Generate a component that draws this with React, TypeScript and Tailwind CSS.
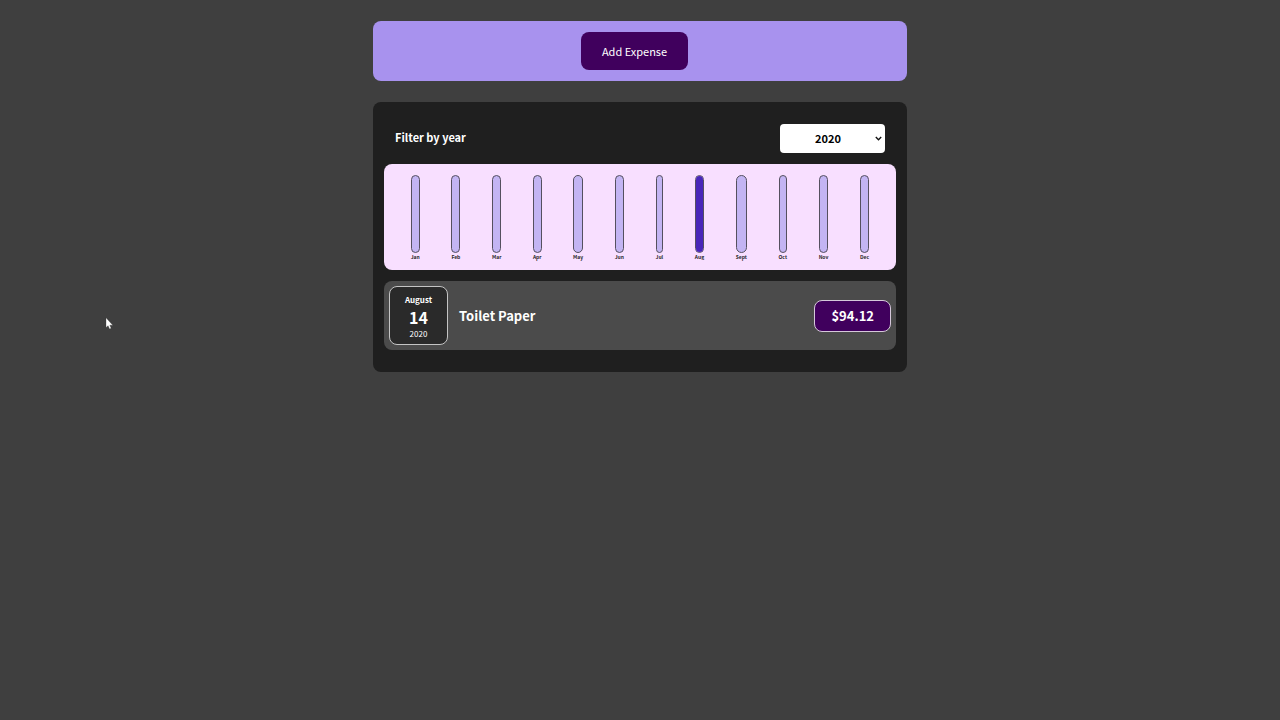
import { useState } from "react";

const MONTHS = ["Jan", "Feb", "Mar", "Apr", "May", "Jun", "Jul", "Aug", "Sept", "Oct", "Nov", "Dec"];

type Expense = { title: string; amount: number; month: number; monthName: string; day: number; year: string };

const EXPENSES: Expense[] = [
  { title: "Toilet Paper", amount: 94.12, month: 7, monthName: "August", day: 14, year: "2020" },
];

function ChartBar({ label, percent }: { label: string; percent: number }) {
  return (
    <li className="flex h-full flex-col items-center">
      <div className="flex w-full flex-1 flex-col justify-end overflow-hidden rounded-lg border border-[#55505f] bg-[#c3b4f3]">
        <div className="bg-[#4826b9]" style={{ height: `${percent}%` }} />
      </div>
      <span className="text-center text-[5px] leading-[8px] font-bold text-[#1f1f1f]">{label}</span>
    </li>
  );
}

function Chart({ expenses }: { expenses: Expense[] }) {
  const totals = MONTHS.map((_, i) => expenses.filter((e) => e.month === i).reduce((s, e) => s + e.amount, 0));
  const max = Math.max(...totals, 1);
  return (
    <ul className="flex h-[106px] justify-around rounded-lg bg-[#f8dfff] px-[11px] pt-[11px] pb-[9px]">
      {MONTHS.map((m, i) => (
        <ChartBar key={m} label={m} percent={(totals[i] / max) * 100} />
      ))}
    </ul>
  );
}

function ExpenseItem({ expense }: { expense: Expense }) {
  return (
    <li className="flex items-center gap-[11px] rounded-lg bg-[#4b4b4b] p-[5px] text-white">
      <time className="flex w-[59px] flex-col items-center rounded-lg border border-[#c4c4c4] bg-[#2a2a2a] pt-[6px] pb-1">
        <span className="text-[8px] leading-[14px] font-bold">{expense.monthName}</span>
        <span className="text-base leading-[20px] font-bold">{expense.day}</span>
        <span className="text-[8px] leading-[13px]">{expense.year}</span>
      </time>
      <h2 className="flex-1 text-[13px] leading-5 font-bold">{expense.title}</h2>
      <p className="rounded-lg border border-[#d5c8da] bg-[#40005d] px-4 py-[5px] text-[13px] leading-5 font-bold">
        ${expense.amount.toFixed(2)}
      </p>
    </li>
  );
}

export default function App() {
  const [year, setYear] = useState("2020");
  const shown = EXPENSES.filter((e) => e.year === year);
  return (
    <div className="min-h-screen bg-[#3f3f3f] px-4 py-[21px] font-['Noto_Sans_CJK_JP','Noto_Sans',sans-serif]">
      <main className="mx-auto flex max-w-[534px] flex-col gap-[21px]">
        <section className="flex justify-center rounded-lg bg-[#a892ee] p-[11px]">
          <button
            type="button"
            className="mr-[11px] rounded-lg bg-[#40005d] px-[21px] py-[10px] text-[11px] leading-[18px] text-white"
          >
            Add Expense
          </button>
        </section>
        <section className="rounded-lg bg-[#1f1f1f] px-[11px] pt-[22px] pb-[22px]">
          <div className="mb-[11px] flex items-center justify-between px-[11px]">
            <label htmlFor="year" className="pb-1 text-[11px] leading-4 font-bold text-white">
              Filter by year
            </label>
            <div className="relative">
              <select
                id="year"
                value={year}
                onChange={(e) => setYear(e.target.value)}
                className="block h-[29px] w-[105px] appearance-none rounded-sm bg-white pl-[35px] text-[11px] font-bold text-black"
              >
                <option value="2022">2022</option>
                <option value="2021">2021</option>
                <option value="2020">2020</option>
                <option value="2019">2019</option>
              </select>
              <svg
                className="pointer-events-none absolute top-3 right-[3px] h-[5px] w-[7px]"
                viewBox="0 0 7 5"
                fill="none"
                stroke="#111"
                strokeWidth="1.4"
                aria-hidden="true"
              >
                <path d="M.8 1.1 3.5 3.8 6.2 1.1" />
              </svg>
            </div>
          </div>
          <Chart expenses={shown} />
          <ul className="mt-[11px]">
            {shown.map((e) => (
              <ExpenseItem key={e.title} expense={e} />
            ))}
          </ul>
        </section>
      </main>
      <svg className="pointer-events-none absolute top-[317px] left-[105px] h-[13px] w-[9px]" viewBox="0 0 9 13" aria-hidden="true">
        <path d="M1 .8v9.8l2.1-1.9 1.4 3.3 1.7-.7-1.4-3.1h3z" fill="#fff" stroke="#333" strokeWidth=".3" />
      </svg>
    </div>
  );
}
